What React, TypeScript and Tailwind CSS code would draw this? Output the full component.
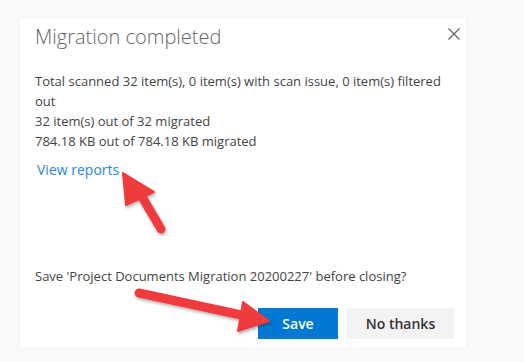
import React from "react";

function ArrowUp() {
    // red annotation arrows
    return (
        <svg className="absolute left-0 top-0 pointer-events-none" width="524" height="362">
            <defs>
                <filter id="sh" x="-20%" y="-20%" width="140%" height="140%">
                    <feDropShadow dx="1" dy="2" stdDeviation="1.5" floodColor="#000" floodOpacity="0.3"/>
                </filter>
            </defs>
            <g filter="url(#sh)" fill="#ef3b3d" stroke="#ef3b3d" strokeLinejoin="round">
                <line x1="161" y1="229" x2="138" y2="190" strokeWidth="9" strokeLinecap="round"/>
                <polygon points="123,173 154,192 126,205" strokeWidth="2"/>
                <line x1="139" y1="293" x2="246" y2="316" strokeWidth="9" strokeLinecap="round"/>
                <polygon points="269,321 243,302 238,331" strokeWidth="2"/>
            </g>
        </svg>
    );
}

export default function App() {
    return (
        <div className="relative w-[524px] h-[362px] bg-[#fafafa] overflow-hidden" style={{fontFamily: '"Open Sans", "Noto Sans", sans-serif'}}>
            <div className="flex pt-[18px] pl-[20px]">
                <div className="w-[446px] h-[330px] bg-white shadow-[0_0_3px_rgba(0,0,0,0.06)] flex flex-col pl-[15px] pr-[12px]">
                    <div className="flex items-start justify-between pt-[5px] -mr-[6px]">
                        <h1 className="text-[20px] leading-[28px] font-light text-[#666]">Migration completed</h1>
                        <svg className="mt-[5px]" width="12" height="12" viewBox="0 0 12 12">
                            <path d="M0.5 0.5 L11.5 11.5 M11.5 0.5 L0.5 11.5" stroke="#666" strokeWidth="1.2"/>
                        </svg>
                    </div>
                    <div className="mt-[20px] text-[13px] leading-[20px] text-[#444] pr-[8px]">
                        <p>Total scanned 32 item(s), 0 item(s) with scan issue, 0 item(s) filtered out</p>
                        <p>32 item(s) out of 32 migrated</p>
                        <p>784.18 KB out of 784.18 KB migrated</p>
                    </div>
                    <a className="mt-[9px] ml-[2px] text-[14px] leading-[20px] text-[#2a86d6] self-start">View reports</a>
                    <p className="mt-[86px] text-[13px] leading-[20px] text-[#444]">Save 'Project Documents Migration 20200227' before closing?</p>
                    <div className="mt-[22px] flex justify-end gap-[9px]">
                        <button className="w-[80px] h-[31px] bg-[#0078d4] text-white text-[14px] font-semibold">Save</button>
                        <button className="w-[107px] h-[31px] bg-[#f3f3f3] text-[#333] text-[14px] font-semibold">No thanks</button>
                    </div>
                </div>
            </div>
            <ArrowUp/>
        </div>
    );
}
